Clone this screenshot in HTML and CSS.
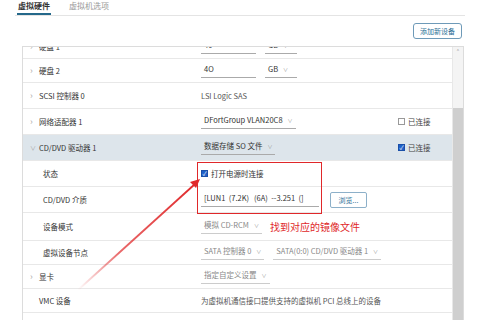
FILE: index.html
```html
<!DOCTYPE html>
<html lang="zh-CN">
<head>
    <meta charset="UTF-8">
    <meta name="viewport" content="width=device-width, initial-scale=1.0">
    <title>虚拟硬件</title>
    <link rel="stylesheet" href="styles.css">
</head>
<body>

<div class="page">
    <div class="tabs">
        <span class="tab active">虚拟硬件</span>
        <span class="tab">虚拟机选项</span>
    </div>

    <div class="toolbar">
        <button class="add-button">添加新设备</button>
    </div>

    <div class="hw-box">
        <div class="hw-list">
            <div class="rows">
                <div class="row compact">
                    <div class="label"><span class="chev">›</span>硬盘 1</div>
                    <div class="value">
                        <span class="input short">40</span>
                        <span class="select unit">GB <i>∨</i></span>
                    </div>
                    <div class="extra"></div>
                </div>
                <div class="row compact">
                    <div class="label"><span class="chev">›</span>硬盘 2</div>
                    <div class="value">
                        <span class="input short">4O</span>
                        <span class="select unit">GB <i>∨</i></span>
                    </div>
                    <div class="extra"></div>
                </div>
                <div class="row">
                    <div class="label"><span class="chev">›</span>SCSI 控制器 0</div>
                    <div class="value plain">LSI Logic SAS</div>
                    <div class="extra"></div>
                </div>
                <div class="row">
                    <div class="label"><span class="chev">›</span>网络适配器 1</div>
                    <div class="value">
                        <span class="select">DFortGroup VLAN20C8 <i>∨</i></span>
                    </div>
                    <div class="extra"><span class="box"></span>已连接</div>
                </div>
                <div class="row selected">
                    <div class="label"><span class="chev open">∨</span>CD/DVD 驱动器 1</div>
                    <div class="value">
                        <span class="select">数据存储 SO 文件 <i>∨</i></span>
                    </div>
                    <div class="extra"><span class="box checked">✓</span>已连接</div>
                </div>
                <div class="row">
                    <div class="label sub">状态</div>
                    <div class="value"><span class="box checked">✓</span>打开电源时连接</div>
                    <div class="extra"></div>
                </div>
                <div class="row">
                    <div class="label sub">CD/DVD 介质</div>
                    <div class="value">
                        <span class="input long">[LUN1&nbsp; (7.2K)&nbsp;&nbsp; (6A)&nbsp; --3.251&nbsp; (]</span>
                        <button class="browse-button">浏览...</button>
                    </div>
                    <div class="extra"></div>
                </div>
                <div class="row tall">
                    <div class="label sub">设备模式</div>
                    <div class="value">
                        <span class="select muted">模拟 CD-RCM <i>∨</i></span>
                        <span class="note">找到对应的镜像文件</span>
                    </div>
                    <div class="extra"></div>
                </div>
                <div class="row compact">
                    <div class="label sub">虚拟设备节点</div>
                    <div class="value">
                        <span class="select muted">SATA 控制器 0 <i>∨</i></span>
                        <span class="select muted">SATA(0:0) CD/DVD 驱动器 1 <i>∨</i></span>
                    </div>
                    <div class="extra"></div>
                </div>
                <div class="row compact">
                    <div class="label"><span class="chev">›</span>显卡</div>
                    <div class="value">
                        <span class="select muted">指定自定义设置 <i>∨</i></span>
                    </div>
                    <div class="extra"></div>
                </div>
                <div class="row compact">
                    <div class="label vmc">VMC 设备</div>
                    <div class="value plain">为虚拟机通信接口提供支持的虚拟机 PCI 总线上的设备</div>
                    <div class="extra"></div>
                </div>
                <div class="row">
                    <div class="label vmc">其他设备</div>
                    <div class="value"></div>
                    <div class="extra"></div>
                </div>
            </div>
        </div>
        <div class="scrollbar">
            <span class="scroll-up">˄</span>
            <div class="thumb"></div>
        </div>
    </div>

    <div class="callout"></div>

    <svg class="arrow" width="480" height="320" viewBox="0 0 480 320">
        <defs>
            <linearGradient id="fade" gradientUnits="userSpaceOnUse" x1="78" y1="290" x2="196" y2="183">
                <stop offset="0" stop-color="#e0282a" stop-opacity="0"/>
                <stop offset="0.35" stop-color="#e0282a" stop-opacity="0.7"/>
                <stop offset="1" stop-color="#e0282a" stop-opacity="1"/>
            </linearGradient>
        </defs>
        <line x1="78" y1="290" x2="195" y2="184" stroke="url(#fade)" stroke-width="1.8"/>
        <polygon points="200,179 196,188 190,182" fill="#e0282a"/>
    </svg>
</div>

</body>
</html>
```

FILE: styles.css
```css
body {
    margin: 0;
    background: #fff;
    font-family: "Noto Sans CJK SC", "Noto Sans", sans-serif;
    color: #333;
    overflow: hidden;
}
.page {
    position: relative;
    width: 480px;
    height: 320px;
    overflow: hidden;
}
.tabs {
    display: flex;
    gap: 17px;
    margin: 0 15px 0 15px;
    padding-left: 2px;
    height: 15px;
    border-bottom: 1px solid #e4e4e4;
}
.tab {
    font-size: 8px;
    line-height: 12px;
    color: #999;
    padding: 0 1px;
    border-bottom: 2px solid transparent;
}
.tab.active {
    color: #333;
    font-weight: bold;
    border-bottom-color: #24688a;
}
.toolbar {
    display: flex;
    justify-content: flex-end;
    align-items: flex-start;
    padding: 7px 18px 0 0;
    height: 30px;
    box-sizing: border-box;
}
.add-button {
    font-family: inherit;
    font-size: 7px;
    color: #2b6f96;
    background: #fff;
    border: 1px solid #6e9ab8;
    border-radius: 3px;
    padding: 0 6px;
    height: 16px;
}
.hw-box {
    display: flex;
    margin-left: 22px;
    width: 440px;
    height: 274px;
    border: 1px solid #dcdcdc;
    border-bottom: none;
    overflow: hidden;
}
.hw-list {
    flex: 1;
    overflow: hidden;
}
.rows {
    margin-top: -12px;
}
.row {
    display: grid;
    grid-template-columns: 176px 1fr 62px;
    align-items: center;
    height: 26px;
    box-sizing: border-box;
    border-bottom: 1px solid #e8e8e8;
    font-size: 7.5px;
}
.row.compact {
    height: 24px;
}
.row.tall {
    height: 28px;
}
.row.selected {
    background: #dde5eb;
}
.label {
    display: flex;
    align-items: center;
    padding-left: 7px;
    color: #333;
}
.label.sub {
    padding-left: 20px;
}
.label.vmc {
    padding-left: 16px;
}
.chev {
    width: 9px;
    color: #aaa;
    font-size: 9px;
}
.chev.open {
    font-size: 6px;
}
.value {
    display: flex;
    align-items: center;
    gap: 9px;
    padding-left: 2px;
    color: #333;
}
.value.plain {
    padding-left: 2px;
    color: #555;
}
.input {
    display: inline-block;
    width: 52px;
    padding: 0 0 3px 3px;
    border-bottom: 1px solid #aaa;
    color: #333;
}
.input.long {
    width: 115px;
}
.select {
    display: inline-flex;
    align-items: center;
    padding: 0 3px 3px 3px;
    border-bottom: 1px solid #aaa;
    color: #333;
}
.select i {
    font-style: normal;
    font-size: 5px;
    color: #999;
    margin-left: 5px;
}
.select.unit {
    width: 26px;
}
.select.muted {
    color: #888;
    border-bottom-color: #ccc;
}
.box {
    display: inline-flex;
    align-items: center;
    justify-content: center;
    width: 7px;
    height: 7px;
    border: 1px solid #999;
    margin-right: 3px;
    font-size: 6px;
    color: #fff;
    box-sizing: border-box;
}
.box.checked {
    background: #1f5fc8;
    border-color: #1a4fa8;
}
.value .box {
    margin-right: -6px;
}
.extra {
    display: flex;
    align-items: center;
    padding-left: 8px;
    color: #444;
}
.browse-button {
    font-family: inherit;
    font-size: 7px;
    color: #2b6f96;
    background: #fff;
    border: 1px solid #8db0c9;
    border-radius: 2px;
    height: 16px;
    width: 37px;
    margin-left: 2px;
}
.note {
    font-size: 10px;
    color: #e0282a;
    margin-left: -1px;
}
.scrollbar {
    display: flex;
    flex-direction: column;
    align-items: center;
    width: 10px;
    border-left: 1px solid #e8e8e8;
    background: #f4f4f4;
}
.scroll-up {
    font-size: 8px;
    line-height: 12px;
    color: #888;
}
.thumb {
    margin-top: 49px;
    flex: 1;
    width: 10px;
    background: #cfcfcf;
}
.callout {
    position: absolute;
    left: 197px;
    top: 162px;
    width: 123px;
    height: 50px;
    border: 1.5px solid #e0282a;
}
.arrow {
    position: absolute;
    left: 0;
    top: 0;
    pointer-events: none;
}
```
